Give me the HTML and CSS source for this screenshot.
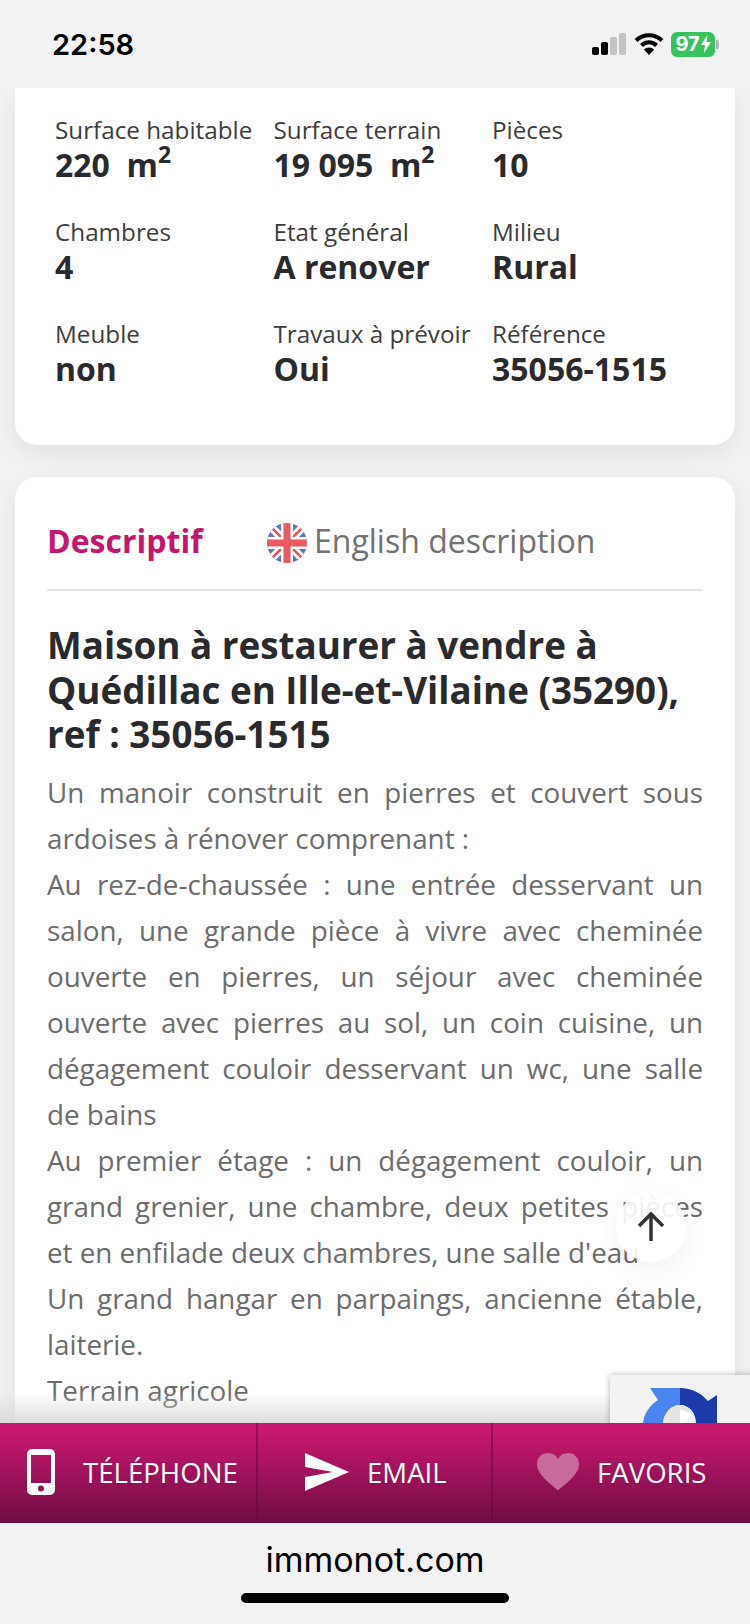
FILE: index.html
```html
<!DOCTYPE html>
<html lang="fr">
<head>
  <meta charset="UTF-8">
  <meta name="viewport" content="width=device-width, initial-scale=1.0">
  <title>immonot.com</title>
  <link rel="stylesheet" href="styles.css">
</head>
<body>
  <div class="phone">
    <!-- Barre d'etat -->
    <div class="status">
      <span class="clock">22:58</span>
      <div class="status-icons">
        <svg class="signal" width="36" height="24" viewBox="0 0 36 24">
          <rect x="1" y="15" width="7" height="8" rx="2" fill="#000"/>
          <rect x="10" y="10" width="7" height="13" rx="2" fill="#000"/>
          <rect x="19" y="5" width="7" height="18" rx="2" fill="#c4c4c4"/>
          <rect x="28" y="1" width="7" height="22" rx="2" fill="#c4c4c4"/>
        </svg>
        <svg class="wifi" width="30" height="24" viewBox="0 0 30 24">
          <path d="M2 8.500a18.500 18.500 0 0 1 26 0" fill="none" stroke="#000" stroke-width="4"/>
          <path d="M7.500 13.500a10.500 10.500 0 0 1 15 0" fill="none" stroke="#000" stroke-width="4"/>
          <path d="M15 23l-5-5.500a7 7 0 0 1 10 0z" fill="#000"/>
        </svg>
        <div class="battery">
          <span>97</span>
          <svg width="10" height="18" viewBox="0 0 10 18"><path d="M6.500 0L0 10h4l-1 8 7-11H5.500z" fill="#fff"/></svg>
        </div>
        <div class="battery-cap"></div>
      </div>
    </div>

    <div class="content">
      <div class="card specs">
        <div class="spec"><span class="spec-label">Surface habitable</span><b class="spec-value">220 &nbsp;m<sup>2</sup></b></div>
        <div class="spec"><span class="spec-label">Surface terrain</span><b class="spec-value">19 095 &nbsp;m<sup>2</sup></b></div>
        <div class="spec"><span class="spec-label">Pièces</span><b class="spec-value">10</b></div>
        <div class="spec"><span class="spec-label">Chambres</span><b class="spec-value">4</b></div>
        <div class="spec"><span class="spec-label">Etat général</span><b class="spec-value">A renover</b></div>
        <div class="spec"><span class="spec-label">Milieu</span><b class="spec-value">Rural</b></div>
        <div class="spec"><span class="spec-label">Meuble</span><b class="spec-value">non</b></div>
        <div class="spec"><span class="spec-label">Travaux à prévoir</span><b class="spec-value">Oui</b></div>
        <div class="spec"><span class="spec-label">Référence</span><b class="spec-value">35056-1515</b></div>
      </div>

      <div class="card descr">
        <div class="tabs">
          <span class="tab-active">Descriptif</span>
          <span class="tab-other">
            <svg class="flag" width="42" height="42" viewBox="0 0 42 42">
              <defs><clipPath id="rond"><circle cx="21" cy="21" r="20"/></clipPath></defs>
              <g clip-path="url(#rond)">
                <rect width="42" height="42" fill="#6476ab"/>
                <path d="M0 0L42 42M42 0L0 42" stroke="#fff" stroke-width="8"/>
                <path d="M0 0L42 42M42 0L0 42" stroke="#e8505b" stroke-width="2.500"/>
                <rect x="15" width="12" height="42" fill="#fff"/>
                <rect y="15" width="42" height="12" fill="#fff"/>
                <rect x="17.500" width="7" height="42" fill="#ea5a62"/>
                <rect y="17.500" width="42" height="7" fill="#ea5a62"/>
              </g>
            </svg>
            English description
          </span>
        </div>
        <h1>Maison à restaurer à vendre à Quédillac en Ille-et-Vilaine (35290), ref : 35056-1515</h1>
        <p>Un manoir construit en pierres et couvert sous ardoises à rénover comprenant :</p>
        <p>Au rez-de-chaussée : une entrée desservant un salon, une grande pièce à vivre avec cheminée ouverte en pierres, un séjour avec cheminée ouverte avec pierres au sol, un coin cuisine, un dégagement couloir desservant un wc, une salle de bains</p>
        <p>Au premier étage : un dégagement couloir, un grand grenier, une chambre, deux petites pièces et en enfilade deux chambres, une salle d'eau</p>
        <p>Un grand hangar en parpaings, ancienne étable, laiterie.</p>
        <p>Terrain agricole</p>
      </div>

      <!-- Bouton retour en haut -->
      <div class="to-top">
        <svg width="34" height="34" viewBox="0 0 34 34"><path d="M17 31V5M5 16L17 4l12 12" fill="none" stroke="#333" stroke-width="3.500"/></svg>
      </div>

      <div class="fade"></div>
      <div class="captcha">
        <svg width="74" height="35" viewBox="0 0 74 35">
          <path d="M0 35C1 26 6 18 15 12L7 0h30v17C28 17 21 25 20 35z" fill="#4a84ee"/>
          <path d="M37 0c11 0 21 5 28 13l9-6v28H53c0-10-7-18-16-18z" fill="#1c3aa9"/>
          <path d="M37 17c6 0 11 4 14 9l-14 9c-7 0-14 0-17 0 1-10 8-18 17-18z" fill="#e4e4e4"/>
          <path d="M37 21l12 5-8 9H37z" fill="#fff"/>
        </svg>
      </div>
    </div>

    <!-- Barre d'actions -->
    <div class="actions">
      <a class="action action-tel">
        <svg width="28" height="46" viewBox="0 0 28 46">
          <path fill-rule="evenodd" d="M5 0h18a5 5 0 0 1 5 5v36a5 5 0 0 1-5 5H5a5 5 0 0 1-5-5V5a5 5 0 0 1 5-5zM4 6v28h20V6zM14 36.500a3 3 0 1 0 0 6 3 3 0 0 0 0-6z" fill="#fff"/>
        </svg>
        TÉLÉPHONE
      </a>
      <a class="action action-mail">
        <svg width="44" height="38" viewBox="0 0 44 38"><path d="M0 0l44 19L0 38v-14l28-5-28-5z" fill="#fff"/></svg>
        EMAIL
      </a>
      <a class="action action-fav">
        <svg width="42" height="38" viewBox="0 0 42 38"><path d="M21 37.500C14 31 0 22 0 11 0 4.500 5 0 11 0c4.500 0 8 2 10 6 2-4 5.500-6 10-6 6 0 11 4.500 11 11 0 11-14 20-21 26.500z" fill="#c86b9c"/></svg>
        FAVORIS
      </a>
    </div>

    <!-- Barre du navigateur -->
    <div class="browser">
      <span class="url">immonot.com</span>
      <div class="home-bar"></div>
    </div>
  </div>
</body>
</html>
```

FILE: styles.css
```css
* {
  box-sizing: border-box;
}

body {
  margin: 0;
  background-color: #f2f2f2;
  font-family: "Open Sans", sans-serif;
}

.phone {
  display: flex;
  flex-direction: column;
  height: 1624px;
  overflow: hidden;
}

/* Barre d'etat */
.status {
  flex: 0 0 88px;
  display: flex;
  justify-content: space-between;
  align-items: center;
  padding: 0 31px 0 52px;
  background-color: #f2f2f2;
  z-index: 2;
}

.clock {
  font-family: Inter, sans-serif;
  font-size: 29px;
  font-weight: 600;
  color: #000;
}

.status-icons {
  display: flex;
  align-items: center;
}

.wifi {
  margin-left: 7px;
}

.battery {
  display: flex;
  align-items: center;
  justify-content: center;
  gap: 1px;
  width: 44px;
  height: 25px;
  margin-left: 7px;
  border-radius: 6px;
  background-color: #36c25c;
  color: #fff;
  font-family: Inter, sans-serif;
  font-size: 20px;
  font-weight: 700;
}

.battery-cap {
  width: 3px;
  height: 9px;
  margin-left: 1px;
  border-radius: 0 2px 2px 0;
  background-color: #b5b5b5;
}

/* Contenu */
.content {
  position: relative;
  flex: 1;
  overflow: hidden;
  padding: 0 15px;
  background-color: #f2f2f2;
}

.card {
  background-color: white;
  border-radius: 0 0 22px 22px;
  box-shadow: 0 8px 24px rgba(0, 0, 0, 0.07);
}

.specs {
  display: grid;
  grid-template-columns: repeat(3, 218.500px);
  grid-auto-rows: 102px;
  height: 357px;
  padding: 25px 0 0 40px;
}

.spec-label {
  display: block;
  height: 32px;
  font-size: 24.250px;
  line-height: 33px;
  color: #3d3d3d;
}

.spec-value {
  display: block;
  font-size: 32px;
  font-weight: 700;
  line-height: 40px;
  color: #2a2a2d;
}

.spec-value sup {
  font-size: 23px;
  line-height: 0;
  vertical-align: 14px;
}

.descr {
  height: 1000px;
  margin-top: 32px;
  padding: 0 32px;
  border-radius: 22px;
}

.tabs {
  display: flex;
  align-items: center;
  height: 114px;
  padding-top: 14px;
  border-bottom: 2px solid #e4e4e4;
}

.tab-active {
  width: 220px;
  font-size: 32px;
  font-weight: 700;
  color: #c5166f;
}

.tab-other {
  display: flex;
  align-items: center;
  gap: 6px;
  font-size: 32px;
  color: #727272;
}

.flag {
  margin-top: 6px;
  margin-left: -1px;
}

.descr h1 {
  margin: 32px 0 0;
  font-size: 36.800px;
  font-weight: 700;
  line-height: 44.500px;
  color: #2a2a2d;
}

.descr p {
  margin: 0;
  font-size: 27.800px;
  line-height: 46px;
  text-align: justify;
  color: #6c6c6c;
}

.descr h1 + p {
  margin-top: 12px;
}

/* Elements flottants */
.to-top {
  position: absolute;
  left: 616px;
  top: 1104px;
  display: flex;
  align-items: center;
  justify-content: center;
  width: 70px;
  height: 70px;
  border-radius: 50%;
  background-color: rgba(255, 255, 255, 0.9);
  box-shadow: 0 8px 30px rgba(0, 0, 0, 0.06);
}

.captcha {
  position: absolute;
  left: 610px;
  top: 1287px;
  width: 160px;
  height: 60px;
  padding: 13px 0 0 33px;
  border-radius: 3px;
  background-color: #f3f3f3;
  box-shadow: 0 0 6px rgba(0, 0, 0, 0.3);
}

.captcha svg {
  display: block;
}

.fade {
  position: absolute;
  left: 0;
  right: 0;
  bottom: 0;
  height: 30px;
  background: linear-gradient(rgba(225, 225, 225, 0), rgba(215, 215, 215, 0.85));
}

/* Barre d'actions */
.actions {
  flex: 0 0 100px;
  display: flex;
  background: linear-gradient(#c8186e, #c8186e 8%, #6e0c45);
  color: white;
  font-size: 27.600px;
  z-index: 2;
}

.action {
  display: flex;
  align-items: center;
  height: 100%;
  padding-bottom: 2px;
}

.action-tel {
  width: 258px;
  gap: 28px;
  padding-left: 27px;
  border-right: 2px solid rgba(90, 10, 60, 0.5);
}

.action-mail {
  width: 235px;
  gap: 18px;
  padding-left: 47px;
  border-right: 2px solid rgba(90, 10, 60, 0.5);
}

.action-fav {
  gap: 18px;
  padding-left: 44px;
}

/* Barre du navigateur */
.browser {
  flex: 0 0 101px;
  display: flex;
  flex-direction: column;
  align-items: center;
  background-color: #f2f2f2;
  z-index: 2;
}

.url {
  margin-top: 14px;
  font-family: Inter, sans-serif;
  font-size: 34px;
  line-height: 46px;
  color: #000;
}

.home-bar {
  width: 268px;
  height: 10px;
  margin-top: 10px;
  border-radius: 5px;
  background-color: #000;
}
```
